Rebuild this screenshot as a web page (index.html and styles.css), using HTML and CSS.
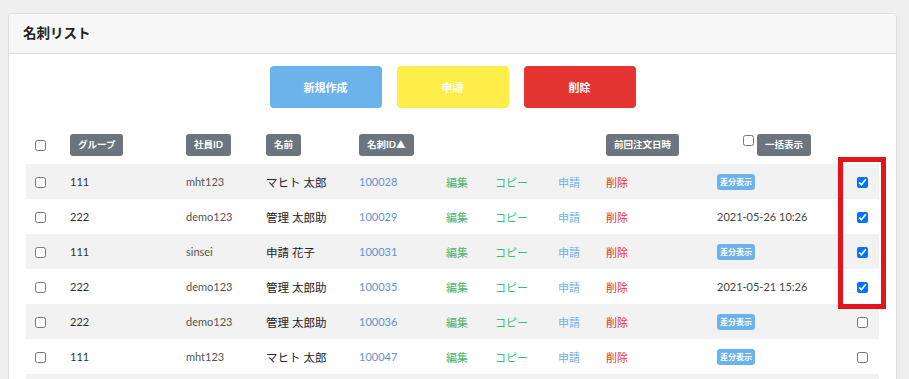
FILE: index.html
```html
<!DOCTYPE html>
<html lang="ja">
<head>
    <meta charset="UTF-8">
    <meta name="viewport" content="width=device-width, initial-scale=1.0">
    <title>名刺リスト</title>
    <link rel="stylesheet" href="styles.css">
</head>
<body>
    <div class="card">
        <div class="card-header">名刺リスト</div>
        <div class="card-body">
            <div class="actions">
                <a href="#" class="btn btn-blue">新規作成</a>
                <a href="#" class="btn btn-yellow">申請</a>
                <a href="#" class="btn btn-red">削除</a>
            </div>

            <table class="list">
                <colgroup>
                    <col style="width: 36px">
                    <col style="width: 116px">
                    <col style="width: 80px">
                    <col style="width: 93px">
                    <col style="width: 87px">
                    <col style="width: 49px">
                    <col style="width: 63px">
                    <col style="width: 48px">
                    <col style="width: 111px">
                    <col style="width: 126px">
                    <col style="width: 44px">
                </colgroup>
                <thead>
                    <tr>
                        <th class="cb"><input type="checkbox"></th>
                        <th><span class="tag">グループ</span></th>
                        <th><span class="tag">社員ID</span></th>
                        <th><span class="tag">名前</span></th>
                        <th><span class="tag">名刺ID▲</span></th>
                        <th></th>
                        <th></th>
                        <th></th>
                        <th><span class="tag">前回注文日時</span></th>
                        <th class="bulk"><input type="checkbox"><span class="tag">一括表示</span></th>
                        <th></th>
                    </tr>
                </thead>
                <tbody>
                    <tr>
                        <td class="cb"><input type="checkbox"></td>
                        <td>111</td>
                        <td class="emp">mht123</td>
                        <td class="name">マヒト 太郎</td>
                        <td><a href="#" class="id">100028</a></td>
                        <td class="edit">編集</td>
                        <td class="copy">コピー</td>
                        <td class="apply">申請</td>
                        <td class="del">削除</td>
                        <td><span class="diff">差分表示</span></td>
                        <td class="cb-r"><input type="checkbox" checked></td>
                    </tr>
                    <tr>
                        <td class="cb"><input type="checkbox"></td>
                        <td>222</td>
                        <td class="emp">demo123</td>
                        <td class="name">管理 太郎助</td>
                        <td><a href="#" class="id">100029</a></td>
                        <td class="edit">編集</td>
                        <td class="copy">コピー</td>
                        <td class="apply">申請</td>
                        <td class="del">削除</td>
                        <td class="date">2021-05-26 10:26</td>
                        <td class="cb-r"><input type="checkbox" checked></td>
                    </tr>
                    <tr>
                        <td class="cb"><input type="checkbox"></td>
                        <td>111</td>
                        <td class="emp">sinsei</td>
                        <td class="name">申請 花子</td>
                        <td><a href="#" class="id">100031</a></td>
                        <td class="edit">編集</td>
                        <td class="copy">コピー</td>
                        <td class="apply">申請</td>
                        <td class="del">削除</td>
                        <td><span class="diff">差分表示</span></td>
                        <td class="cb-r"><input type="checkbox" checked></td>
                    </tr>
                    <tr>
                        <td class="cb"><input type="checkbox"></td>
                        <td>222</td>
                        <td class="emp">demo123</td>
                        <td class="name">管理 太郎助</td>
                        <td><a href="#" class="id">100035</a></td>
                        <td class="edit">編集</td>
                        <td class="copy">コピー</td>
                        <td class="apply">申請</td>
                        <td class="del">削除</td>
                        <td class="date">2021-05-21 15:26</td>
                        <td class="cb-r"><input type="checkbox" checked></td>
                    </tr>
                    <tr>
                        <td class="cb"><input type="checkbox"></td>
                        <td>222</td>
                        <td class="emp">demo123</td>
                        <td class="name">管理 太郎助</td>
                        <td><a href="#" class="id">100036</a></td>
                        <td class="edit">編集</td>
                        <td class="copy">コピー</td>
                        <td class="apply">申請</td>
                        <td class="del">削除</td>
                        <td><span class="diff">差分表示</span></td>
                        <td class="cb-r"><input type="checkbox"></td>
                    </tr>
                    <tr>
                        <td class="cb"><input type="checkbox"></td>
                        <td>111</td>
                        <td class="emp">mht123</td>
                        <td class="name">マヒト 太郎</td>
                        <td><a href="#" class="id">100047</a></td>
                        <td class="edit">編集</td>
                        <td class="copy">コピー</td>
                        <td class="apply">申請</td>
                        <td class="del">削除</td>
                        <td><span class="diff">差分表示</span></td>
                        <td class="cb-r"><input type="checkbox"></td>
                    </tr>
                    <tr class="more">
                        <td colspan="11"></td>
                    </tr>
                </tbody>
            </table>

            <!-- 注釈の赤枠 -->
            <div class="mark"></div>
        </div>
    </div>
</body>
</html>
```

FILE: styles.css
```css
* {
    margin: 0;
    padding: 0;
    box-sizing: border-box;
}

body {
    font-family: Lato, "Noto Sans CJK JP", sans-serif;
    font-size: 11px;
    color: #333;
    background: #efefef;
    padding: 13px 12px 0 8px;
}

.card {
    background: #fff;
    border: 1px solid #dedede;
    border-radius: 4px;
}

.card-header {
    height: 40px;
    padding: 0 0 3px 14px;
    display: flex;
    align-items: center;
    background: #f7f7f7;
    border-bottom: 1px solid #dedede;
    border-radius: 4px 4px 0 0;
    font-size: 13.5px;
    font-weight: bold;
    color: #222;
}

.card-body {
    position: relative;
    padding: 12px 17px 0 17px;
}

.actions {
    display: flex;
    justify-content: center;
    gap: 15px;
}

.btn {
    width: 112px;
    height: 42px;
    display: flex;
    align-items: center;
    justify-content: center;
    border-radius: 4px;
    color: #fff;
    font-weight: bold;
    font-size: 11px;
    text-decoration: none;
}

.btn-blue {
    background: #6cb2eb;
}

.btn-yellow {
    background: #ffed4a;
}

.btn-red {
    background: #e3342f;
}

.list {
    width: 853px;
    margin-top: 17px;
    border-collapse: collapse;
    table-layout: fixed;
}

.list th,
.list td {
    text-align: left;
    vertical-align: middle;
    padding-left: 8px;
    white-space: nowrap;
}

.list th {
    height: 39px;
    font-weight: normal;
}

.list td {
    height: 35px;
}

.list tbody tr:nth-child(odd) {
    background: #f2f2f2;
}

.list input[type="checkbox"] {
    width: 11px;
    height: 11px;
    margin: 0;
    vertical-align: middle;
}

.list .cb {
    padding-left: 9px;
}

.list .cb-r {
    padding-left: 22px;
}

.list .bulk {
    padding-left: 34px;
}

.bulk input[type="checkbox"] {
    position: relative;
    top: -4px;
}

.tag {
    display: inline-block;
    height: 22px;
    line-height: 22px;
    padding: 0 8px;
    background: #6c757d;
    color: #fff;
    font-size: 9.5px;
    font-weight: bold;
    border-radius: 3px;
    vertical-align: middle;
}

.bulk .tag {
    margin-left: 3px;
}

.emp {
    color: #555;
}

.name {
    color: #222;
    font-size: 11.5px;
}

.id {
    color: #5f92d4;
    text-decoration: none;
}

.edit {
    color: #4db36c;
}

.copy {
    color: #38c172;
}

.apply {
    color: #6cb2eb;
}

.del {
    color: #e3342f;
}

.date {
    color: #444;
}

.diff {
    display: inline-block;
    height: 16px;
    line-height: 16px;
    padding: 0 3px;
    background: #6cb2eb;
    color: #fff;
    font-size: 8px;
    font-weight: bold;
    border-radius: 3px;
}

.mark {
    position: absolute;
    left: 829px;
    top: 103px;
    width: 48px;
    height: 152px;
    border: 5px solid #e4141d;
}
```
